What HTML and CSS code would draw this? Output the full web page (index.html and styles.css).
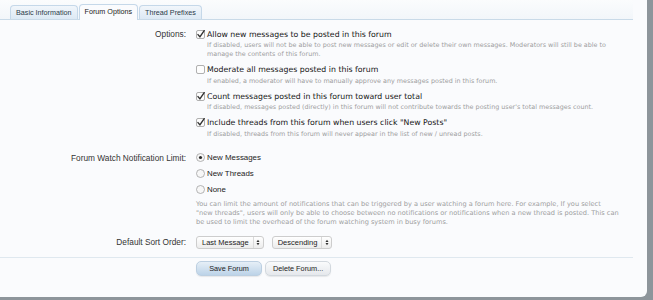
FILE: index.html
```html
<!DOCTYPE html>
<html lang="en">
<head>
<meta charset="utf-8">
<title>Forum Options</title>
<link rel="stylesheet" href="styles.css">
</head>
<body>
<div class="page">
  <div class="tabbar">
    <span class="tab">Basic Information</span>
    <span class="tab active">Forum Options</span>
    <span class="tab">Thread Prefixes</span>
  </div>

  <div class="form">
    <div class="row row-options">
      <div class="row-label">Options:</div>
      <div class="controls">
        <div class="item">
          <div class="item-line">
            <svg class="box" viewBox="0 0 9 9"><rect x="0.5" y="0.5" width="8" height="8" rx="1.5" class="box-bg"/><path d="M2 4.6 L3.9 6.9 L8.2 0.6" class="tick"/></svg>
            <span class="item-text">Allow new messages to be posted in this forum</span>
          </div>
          <div class="hint">If disabled, users will not be able to post new messages or edit or delete their own messages. Moderators will still be able to<br>manage the contents of this forum.</div>
        </div>
        <div class="item">
          <div class="item-line">
            <svg class="box" viewBox="0 0 9 9"><rect x="0.5" y="0.5" width="8" height="8" rx="1.5" class="box-bg"/></svg>
            <span class="item-text">Moderate all messages posted in this forum</span>
          </div>
          <div class="hint">If enabled, a moderator will have to manually approve any messages posted in this forum.</div>
        </div>
        <div class="item">
          <div class="item-line">
            <svg class="box" viewBox="0 0 9 9"><rect x="0.5" y="0.5" width="8" height="8" rx="1.5" class="box-bg"/><path d="M2 4.6 L3.9 6.9 L8.2 0.6" class="tick"/></svg>
            <span class="item-text">Count messages posted in this forum toward user total</span>
          </div>
          <div class="hint">If disabled, messages posted (directly) in this forum will not contribute towards the posting user's total messages count.</div>
        </div>
        <div class="item">
          <div class="item-line">
            <svg class="box" viewBox="0 0 9 9"><rect x="0.5" y="0.5" width="8" height="8" rx="1.5" class="box-bg"/><path d="M2 4.6 L3.9 6.9 L8.2 0.6" class="tick"/></svg>
            <span class="item-text">Include threads from this forum when users click "New Posts"</span>
          </div>
          <div class="hint">If disabled, threads from this forum will never appear in the list of new / unread posts.</div>
        </div>
      </div>
    </div>

    <div class="row row-watch">
      <div class="row-label tall">Forum Watch Notification Limit:</div>
      <div class="controls">
        <div class="radio-line">
          <svg class="radio" viewBox="0 0 9 9"><circle cx="4.5" cy="4.5" r="4" class="radio-bg"/><circle cx="4.5" cy="4.5" r="1.6" class="dot"/></svg>
          <span>New Messages</span>
        </div>
        <div class="radio-line">
          <svg class="radio" viewBox="0 0 9 9"><circle cx="4.5" cy="4.5" r="4" class="radio-bg"/></svg>
          <span>New Threads</span>
        </div>
        <div class="radio-line">
          <svg class="radio" viewBox="0 0 9 9"><circle cx="4.5" cy="4.5" r="4" class="radio-bg"/></svg>
          <span>None</span>
        </div>
        <div class="explain">You can limit the amount of notifications that can be triggered by a user watching a forum here. For example, If you select<br>"new threads", users will only be able to choose between no notifications or notifications when a new thread is posted. This can<br>be used to limit the overhead of the forum watching system in busy forums.</div>
      </div>
    </div>

    <div class="row row-sort">
      <div class="row-label">Default Sort Order:</div>
      <div class="controls selects">
        <span class="select">
          <span class="select-text">Last Message</span>
          <span class="select-arrow"><svg viewBox="0 0 5 8"><path d="M0.6 3.3 L2.5 0.6 L4.4 3.3Z M0.6 4.7 L2.5 7.4 L4.4 4.7Z"/></svg></span>
        </span>
        <span class="select">
          <span class="select-text">Descending</span>
          <span class="select-arrow"><svg viewBox="0 0 5 8"><path d="M0.6 3.3 L2.5 0.6 L4.4 3.3Z M0.6 4.7 L2.5 7.4 L4.4 4.7Z"/></svg></span>
        </span>
      </div>
    </div>

    <div class="submit">
      <button class="btn btn-primary" type="button">Save Forum</button>
      <button class="btn" type="button">Delete Forum...</button>
    </div>
  </div>
</div>
</body>
</html>
```

FILE: styles.css
```css
html, body {
  margin: 0;
  padding: 0;
}

body {
  background: #8d959b;
  font-family: "Liberation Sans", Arial, sans-serif;
  color: #222;
  width: 653px;
  height: 300px;
  overflow: hidden;
}

.page {
  width: 647px;
  height: 297px;
  background: #fafbfd;
  border-bottom-right-radius: 6px;
  overflow: hidden;
}

/* tabs */
.tabbar {
  height: 19px;
  margin-right: 14px;
  padding-left: 10px;
  display: flex;
  align-items: flex-end;
  gap: 1px;
  border-bottom: 1px solid #c9dae8;
  background: linear-gradient(#fbfcfd, #f2f6fa);
}

.tab {
  box-sizing: border-box;
  height: 14px;
  line-height: 13px;
  padding: 0 5px;
  font-size: 7.2px;
  color: #2b3a48;
  background: linear-gradient(#f1f6fb, #dde9f4);
  border: 1px solid #c5d8e9;
  border-bottom: none;
  border-radius: 4px 4px 0 0;
}

.tab.active {
  height: 16px;
  line-height: 14px;
  margin-bottom: -1px;
  background: #fafbfd;
  color: #222;
}

/* form */
.form {
  padding-top: 8px;
}

.row {
  display: grid;
  grid-template-columns: 186px 1fr;
  column-gap: 10px;
}

.row-label {
  text-align: right;
  font-size: 8.3px;
  line-height: 12px;
  color: #333;
  white-space: nowrap;
}

.row-label.tall {
  line-height: 16px;
}

.controls {
  display: flex;
  flex-direction: column;
}

.row-options .controls {
  gap: 4.5px;
}

.item-line {
  display: flex;
  align-items: center;
  height: 12px;
}

.box {
  width: 9px;
  height: 9px;
  margin-right: 2px;
  flex: none;
}

.box-bg {
  fill: #fdfdfd;
  stroke: #9c9c9c;
  stroke-width: 0.8;
}

.tick {
  fill: none;
  stroke: #333;
  stroke-width: 1.4;
  stroke-linecap: round;
  stroke-linejoin: round;
}

.item-text {
  font-family: "DejaVu Sans", Verdana, sans-serif;
  font-size: 7.8px;
  color: #151515;
  white-space: nowrap;
}

.hint {
  margin-top: 1px;
  padding-left: 11px;
  font-family: "DejaVu Sans", Verdana, sans-serif;
  font-size: 6.4px;
  line-height: 9px;
  color: #9d9d9d;
  white-space: nowrap;
}

.row-watch {
  margin-top: 11.2px;
}

.radio-line {
  display: flex;
  align-items: center;
  height: 16px;
  font-size: 7.9px;
  color: #222;
}

.radio {
  width: 9px;
  height: 9px;
  margin-right: 2px;
  flex: none;
}

.radio-bg {
  fill: #f7f7f7;
  stroke: #a2a2a2;
  stroke-width: 0.8;
}

.dot {
  fill: #2a2a2a;
}

.explain {
  margin-top: 2.8px;
  font-family: "DejaVu Sans", Verdana, sans-serif;
  font-size: 6.6px;
  line-height: 8.7px;
  color: #9d9d9d;
  white-space: nowrap;
}

.row-sort {
  margin-top: 9.4px;
}

.selects {
  flex-direction: row;
  gap: 8px;
  align-items: flex-start;
}

.select {
  box-sizing: border-box;
  height: 13px;
  display: inline-flex;
  align-items: stretch;
  border: 1px solid #cdcdcd;
  border-radius: 3px;
  background: linear-gradient(#ffffff, #ececec);
  font-size: 7.5px;
  line-height: 11px;
  color: #222;
}

.select-text {
  padding: 0 4px 0 5px;
  white-space: nowrap;
}

.select-arrow {
  width: 9px;
  border-left: 1px solid #dadada;
  display: flex;
  align-items: center;
  justify-content: center;
}

.select-arrow svg {
  width: 4px;
  height: 7px;
  fill: #333;
}

.submit {
  margin-top: 8px;
  margin-right: 14px;
  border-top: 1px solid #dfe8ef;
  padding: 3px 0 0 196px;
  display: flex;
  gap: 3px;
}

.btn {
  box-sizing: border-box;
  height: 15px;
  padding: 0 7px;
  border: 1px solid #d2d8de;
  border-radius: 5px;
  background: linear-gradient(#fafbfc, #e5e8ec);
  font-family: "Liberation Sans", Arial, sans-serif;
  font-size: 7.3px;
  line-height: 13px;
  color: #222;
  box-shadow: 0 1px 1px rgba(0, 0, 0, 0.08);
  white-space: nowrap;
}

.btn-primary {
  width: 66px;
  padding: 0;
  background: linear-gradient(#e6eff7, #bcd3e8);
  border-color: #bccfe1;
}
```
